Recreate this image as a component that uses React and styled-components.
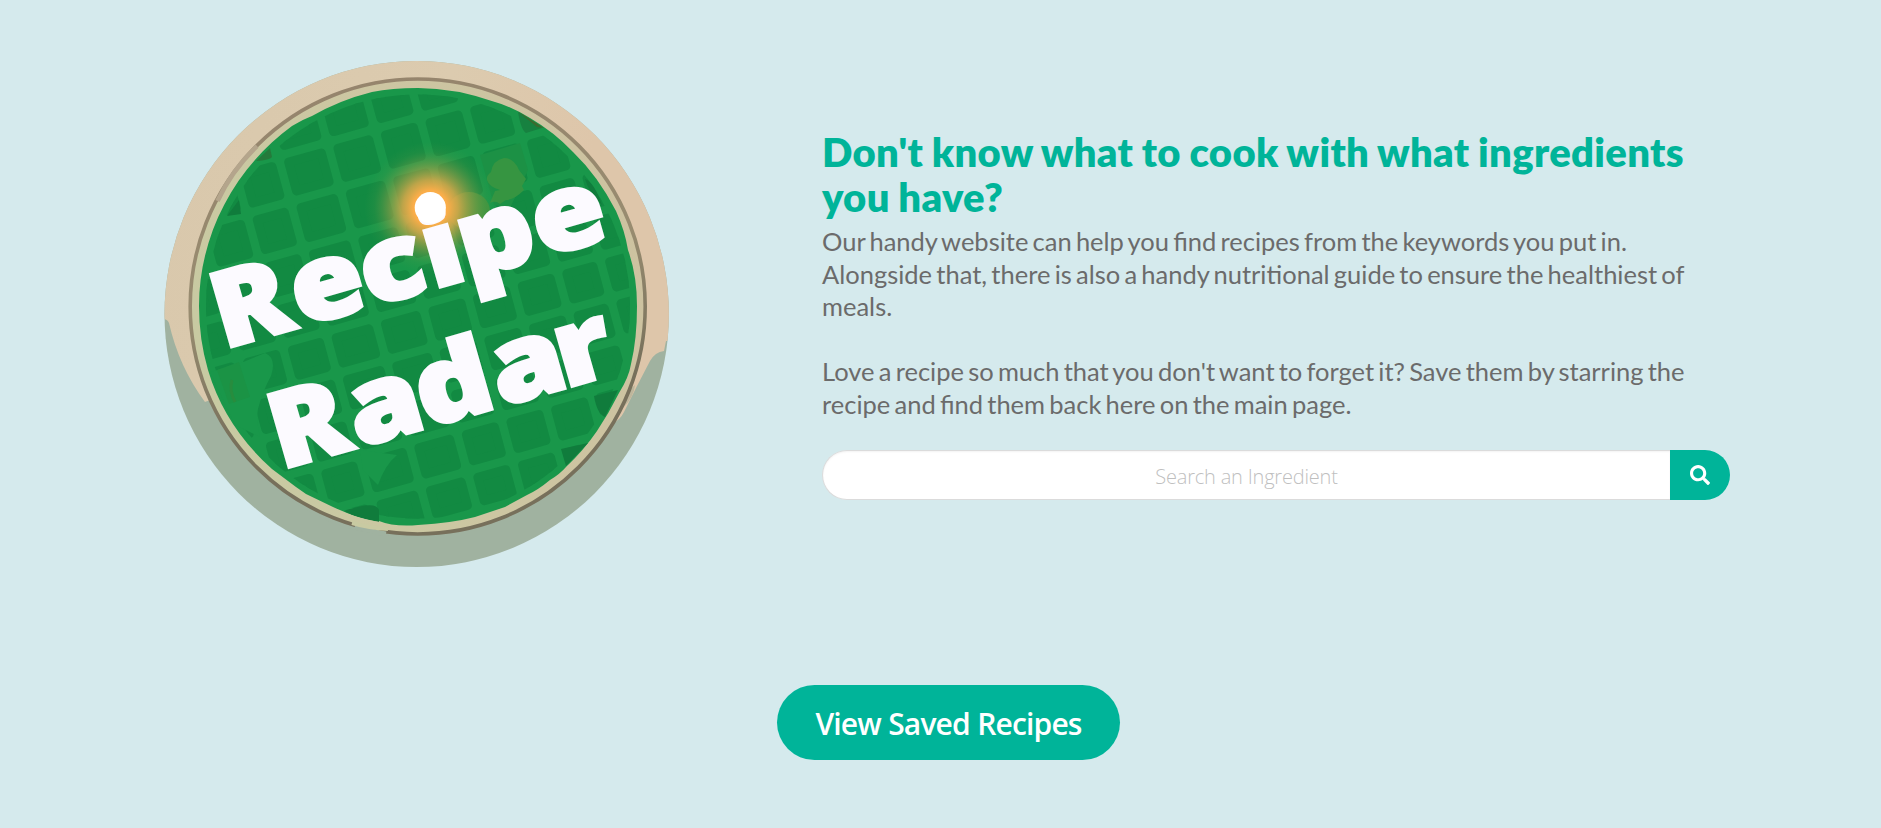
import React from "react";
import styled, { createGlobalStyle } from "styled-components";
import { FaSearch } from "react-icons/fa";

const GlobalStyle = createGlobalStyle`
  *, *::before, *::after { box-sizing: border-box; }
  body { margin: 0; background: #d5eaed; }
`;

const Page = styled.main`
  min-height: 828px;
  background: #d5eaed;
  font-family: Lato, "Liberation Sans", sans-serif;
`;

const Hero = styled.section`
  display: flex;
  align-items: flex-start;
  padding: 56px 151px 0 160px;
  height: 685px;
`;

const Logo = styled.svg`
  display: block;
  flex: none;
  width: 514px;
  height: 516px;
`;

const Intro = styled.div`
  width: 908px;
  margin-left: 148px;
  padding-top: 74px;
`;

const Title = styled.h1`
  margin: 0;
  color: #00b499;
  font-size: 40px;
  font-weight: 800;
  line-height: 45px;
  letter-spacing: 0.32px;
  word-spacing: -1px;
`;

const Copy = styled.p`
  margin: 5px 0 0;
  color: #6b6b6b;
  font-size: 25.5px;
  line-height: 32.5px;
  word-spacing: -2.3px;
  & + & { margin-top: 32.5px; }
`;

const SearchForm = styled.form`
  display: flex;
  width: 908px;
  margin-top: 29.5px;
`;

const SearchInput = styled.input`
  flex: 1;
  min-width: 0;
  height: 50px;
  padding: 3px 28px 0;
  border: 1px solid #dbdbdb;
  border-right: 0;
  border-radius: 25px 0 0 25px;
  background: #fff;
  box-shadow: inset 0 1px 2px rgba(10, 10, 10, 0.05);
  font: 300 20px "Open Sans", "Noto Sans", sans-serif;
  letter-spacing: -0.2px;
  text-align: center;
  outline: none;
  &::placeholder { color: #bfbfbf; opacity: 1; }
`;

const SearchButton = styled.button`
  display: flex;
  align-items: center;
  justify-content: center;
  width: 60px;
  height: 50px;
  padding: 0;
  border: 0;
  border-radius: 0 25px 25px 0;
  background: #00b499;
  color: #fff;
  font-size: 20px;
`;

const Actions = styled.div`
  display: flex;
  padding-left: 777px;
`;

const SavedButton = styled.button`
  width: 343px;
  height: 75px;
  padding: 1px 0 0;
  border: 0;
  border-radius: 38px;
  background: #00b499;
  color: #fff;
  font: 600 30px "Open Sans", "Noto Sans", sans-serif;
  letter-spacing: -0.85px;
  word-spacing: 0.5px;
  white-space: nowrap;
`;

const Word = styled.text`
  font-family: "Noto Sans", "Liberation Sans", sans-serif;
  font-weight: 900;
  font-size: 105px;
  fill: #fcfaff;
  stroke: #fcfaff;
  stroke-width: 3.6px;
`;

// Grid lines of the waffle lattice: rows by their y at x=350, columns by their x at y=300.
const ROWS = [44, 90, 136, 185, 235, 281, 325, 370, 415, 458, 504, 547];
const COLS = [128, 176, 222, 270, 317, 370, 421, 469, 517, 565, 611, 657, 703];

const cross = (row, col) => {
  const y = (row - 0.278 * (col - 81 - 350)) / (1 + 0.278 * 0.27);
  return [col + 0.27 * (y - 300), y];
};

const cells = [];
for (let r = 0; r < ROWS.length - 1; r++) {
  for (let c = 0; c < COLS.length - 1; c++) {
    const top = ROWS[r] + 9;
    const bottom = ROWS[r + 1] - 9;
    const left = COLS[c] + 9;
    const right = COLS[c + 1] - 9;
    cells.push(
      [cross(top, left), cross(top, right), cross(bottom, right), cross(bottom, left)]
        .map((p) => p.map((n) => n.toFixed(1)).join(","))
        .join(" ")
    );
  }
}

function RecipeRadarLogo() {
  return (
    <Logo viewBox="160 56 514 516" role="img" aria-label="Recipe Radar">
      <defs>
        <linearGradient id="rim" x1="0" y1="0.3" x2="1" y2="0.5">
          <stop offset="0" stopColor="#d9c8ac" />
          <stop offset="0.5" stopColor="#dccbaf" />
          <stop offset="0.8" stopColor="#dec6aa" />
        </linearGradient>
        <linearGradient id="lip" x1="0" y1="0.5" x2="1" y2="0.2">
          <stop offset="0" stopColor="#c8caa2" />
          <stop offset="0.5" stopColor="#cdc6a2" />
          <stop offset="1" stopColor="#cdc2a0" />
        </linearGradient>
        <linearGradient id="groove" x1="0" y1="0" x2="0.2" y2="1">
          <stop offset="0" stopColor="#95836c" />
          <stop offset="0.5" stopColor="#988c70" />
          <stop offset="0.8" stopColor="#77705b" />
        </linearGradient>
        <radialGradient id="glow">
          <stop offset="0" stopColor="#ffae49" />
          <stop offset="0.26" stopColor="#ffae49" stopOpacity="0.98" />
          <stop offset="0.42" stopColor="#e9ab4b" stopOpacity="0.8" />
          <stop offset="0.65" stopColor="#b5a349" stopOpacity="0.42" />
          <stop offset="0.85" stopColor="#75a048" stopOpacity="0.12" />
          <stop offset="1" stopColor="#5a9e47" stopOpacity="0" />
        </radialGradient>
        <clipPath id="plate"><ellipse cx="416.7" cy="314" rx="252.2" ry="253" /></clipPath>
        <clipPath id="disc"><circle cx="418" cy="306.5" r="219" /></clipPath>
        <clipPath id="inner"><circle cx="418" cy="306.5" r="212" /></clipPath>
      </defs>

      <ellipse cx="416.7" cy="314" rx="252.2" ry="253" fill="#a0b2a0" />
      <g clipPath="url(#plate)">
        <path
          d="M160 319Q167 318 169 323Q179 367 205 402L211 400L235 440L600 430L612 424Q620 420 624 412L637 386L650 361Q655 352 664 351L666 341H675V50H160Z"
          fill="url(#rim)"
        />
        <path d="M205 402L218 419Q330 600 540 500Q585 470 612 424L590 440L418 480L220 400Z" fill="#a0b2a0" />
        <path d="M635 385Q634 397 623 408L611 425L617 400Z" fill="#beb69c" />
      </g>
      <circle cx="417.7" cy="306.5" r="227.5" fill="url(#lip)" stroke="url(#groove)" strokeWidth="3.6" />
      <path d="M217.500 201Q232 170 257 146" fill="none" stroke="#b4a58c" strokeWidth="4.6" />
      <path d="M355 526Q369 531 386 534" fill="none" stroke="#a0b2a0" strokeWidth="5" />
      <path d="M352 523Q369 528 388 529" fill="none" stroke="#c8caa2" strokeWidth="4" />

      <path
        d="M199 306C199 237 233 169 292 126Q306 118 312 116Q340 100 372 92Q392 88 418 88Q455 88 495 102Q510 106 530 118Q554 132 573 152Q598 176 616 211Q625 231 628 250Q637 275 637 306Q637 339 631 364Q629 377 619 393Q609 413 597 431Q584 450 566 467Q560 474 550 480Q538 490 527 495L505 507L475 517Q452 523 418 525Q394 527 379 521Q356 518 333 507L306 494L296 487L272 469Q225 427 208 370Q199 339 199 306Z"
        fill="#19974a"
      />
      <g clipPath="url(#inner)" fill="#128a42" stroke="#128a42" strokeWidth="9" strokeLinejoin="round">
        {cells.map((points) => <polygon key={points} points={points} />)}
      </g>
      <g clipPath="url(#disc)">
        <path d="M256 161L270 148L272 157Q270 160 256 161Z" fill="#257a3b" />
        <path d="M227 216L239 200L241 214Z" fill="#107c3c" />
        <path d="M518 112L542 128L526 133Q521 130 518 112Z" fill="#178140" />
        <path d="M516 110L544 128L537 127Z" fill="#3b6b2f" />
        <path d="M594 396L618 390L605 417Q597 414 594 396Z" fill="#107c3c" />
        <path d="M561 449L588 443L566 466Z" fill="#107c3c" />
        <path d="M344 511Q376 500 379 510V522Q358 519 344 511Z" fill="#107c3c" />
        <path d="M585 179Q594 182 602 205Q589 193 585 179Z" fill="#107c3c" />
        <path d="M265 353Q277 358 271 376Q263 390 258 409Q256 420 260 437L235 425L210 372L236 365Z" fill="#19974a" />
        <path d="M217 370L239 362L250 397L229 404Z" fill="#1b9345" />
        <path d="M232 380Q229 391 235 402" stroke="#288c3e" strokeWidth="3" fill="none" />
        <path d="M360 450L397 455Q385 465 378 485L363 470Z" fill="#19974a" />
      </g>
      <path d="M480 155L520 143L528 170L510 208L494 205Z" fill="#1c9145" />
      <path
        d="M487 180Q486 176 491 172Q493 160 504 158Q514 158 519 170L526 179L522 186L524 190Q514 200 506 200L500 204Q495 200 490 203L495 191L500 190Q489 187 487 180Z"
        fill="#369541"
      />
      <ellipse cx="469" cy="211" rx="21" ry="19" fill="#3c9541" />
      <circle cx="430.3" cy="207.7" r="66" fill="url(#glow)" />

      <Word transform="translate(229 347.500) rotate(-16) scale(1.130 1)" x="-5 66 129.600 187.700 220 288">
        <tspan textLength="68" lengthAdjust="spacingAndGlyphs">R</tspan>ecipe
      </Word>
      <Word transform="translate(286.300 468) rotate(-16) scale(1.130 1)" x="-5 66 128.400 197.400 256.600">
        <tspan textLength="68" lengthAdjust="spacingAndGlyphs">R</tspan>adar
      </Word>
      <circle cx="430.3" cy="207.7" r="15.6" fill="#fff" />
    </Logo>
  );
}

export default function App() {
  return (
    <Page>
      <GlobalStyle />
      <Hero>
        <RecipeRadarLogo />
        <Intro>
          <Title>Don't know what to cook with what ingredients you have?</Title>
          <Copy>
            Our handy website can help you find recipes from the keywords you put in. Alongside that,
            there is also a handy nutritional guide to ensure the healthiest of meals.
          </Copy>
          <Copy>
            Love a recipe so much that you don't want to forget it? Save them by starring the recipe
            and find them back here on the main page.
          </Copy>
          <SearchForm onSubmit={(e) => e.preventDefault()}>
            <SearchInput placeholder="Search an Ingredient" />
            <SearchButton aria-label="Search"><FaSearch /></SearchButton>
          </SearchForm>
        </Intro>
      </Hero>
      <Actions>
        <SavedButton>View Saved Recipes</SavedButton>
      </Actions>
    </Page>
  );
}
